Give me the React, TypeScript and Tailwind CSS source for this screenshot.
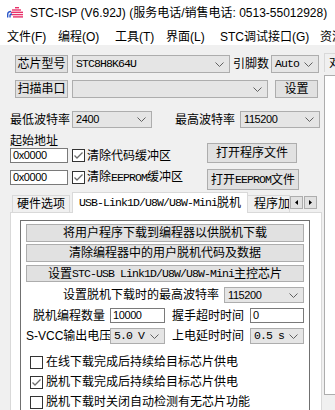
import type { ReactNode } from 'react'

const sans = "font-['Liberation_Sans','Noto_Sans_CJK_SC',sans-serif]"
const mono = "font-['Liberation_Mono','Noto_Sans_CJK_SC',monospace] text-[11.5px] tracking-[-0.9px]"
const num = "font-['Liberation_Sans','Noto_Sans_CJK_SC',sans-serif] text-[11px] tracking-[-0.4px]"

function Logo() {
  return (
    <svg width="16" height="11" viewBox="0 0 16 11" className="shrink-0">
      <rect x="8" y="0" width="4" height="1.4" fill="#e8336b" />
      <rect x="5" y="2.3" width="9" height="1.4" fill="#e8336b" />
      <rect x="4" y="4.6" width="12" height="1.4" fill="#e8336b" />
      <rect x="4" y="6.9" width="12" height="1.4" fill="#e8336b" />
      <rect x="6" y="9.2" width="10" height="1.4" fill="#e8336b" />
      <path d="M0.7 10.5 V7.5 Q0.7 4.5 4 4.5" fill="none" stroke="#2b57c9" strokeWidth="1.4" />
      <path d="M3 10.5 V8.2 Q3 7 5 7" fill="none" stroke="#2b57c9" strokeWidth="1.4" />
    </svg>
  )
}

function Chevron() {
  return (
    <svg width="9" height="5" viewBox="0 0 9 5" className="shrink-0">
      <path d="M0.5 0.5 L4.5 4.5 L8.5 0.5" fill="none" stroke="#606060" strokeWidth="1" />
    </svg>
  )
}

function Btn({ className = '', children }: { className?: string; children: ReactNode }) {
  return (
    <div className={`flex items-center justify-center shrink-0 border border-[#adadad] bg-[#e1e1e1] text-[12px] leading-none whitespace-nowrap ${className}`}>
      {children}
    </div>
  )
}

function Combo({ className = '', text = '', font = mono }: { className?: string; text?: string; font?: string }) {
  return (
    <div className={`flex items-center justify-between shrink-0 border border-[#adadad] bg-[#e5e5e5] pl-[3px] pr-[5px] leading-none ${className}`}>
      <span className={font}>{text}</span>
      <Chevron />
    </div>
  )
}

function Field({ className = '', text, font = num }: { className?: string; text: string; font?: string }) {
  return (
    <div className={`flex items-center shrink-0 border border-[#7a7a7a] bg-white pl-[2px] leading-none ${className}`}>
      <span className={font}>{text}</span>
    </div>
  )
}

function Check({ on = false }: { on?: boolean }) {
  return (
    <div className="w-[13px] h-[13px] shrink-0 border border-[#333333] bg-white">
      {on && (
        <svg width="11" height="11" viewBox="0 0 11 11">
          <path d="M1.5 5.5 L4 8 L9.5 2.5" fill="none" stroke="#6b6b6b" strokeWidth="1.3" />
        </svg>
      )}
    </div>
  )
}

const menus = [
  { label: '文件(F)', w: 'w-[51px]' },
  { label: '编程(O)', w: 'w-[57px]' },
  { label: '工具(T)', w: 'w-[51px]' },
  { label: '界面(L)', w: 'w-[54px]' },
  { label: 'STC调试接口(G)', w: 'w-[100px]' },
  { label: '资源', w: 'w-[40px]' },
]

const checks = [
  { label: '在线下载完成后持续给目标芯片供电', on: false },
  { label: '脱机下载完成后持续给目标芯片供电', on: true },
  { label: '脱机下载时关闭自动检测有无芯片功能', on: false },
]

export default function App() {
  return (
    <div className={`w-[335px] h-[410px] overflow-hidden bg-[#f0f0f0] text-black ${sans}`}>
      {/* title bar */}
      <div className="h-[24px] bg-white flex items-center pl-[7px] pt-[1px]">
        <Logo />
        <span className="ml-[7px] text-[12px] whitespace-nowrap">STC-ISP (V6.92J) (服务电话/销售电话: 0513-55012928)</span>
      </div>

      {/* menu bar */}
      <div className="h-[21px] bg-white flex items-center pl-[7px] pt-[4px] text-[12px] whitespace-nowrap">
        {menus.map(m => (
          <span key={m.label} className={`${m.w} shrink-0`}>{m.label}</span>
        ))}
      </div>

      <div className="flex">
        <div className="w-[324px] shrink-0 pt-[10px]">
          {/* chip */}
          <div className="flex items-center h-[18px] pl-[15px]">
            <Btn className="w-[53px] h-[18px]">芯片型号</Btn>
            <Combo className="ml-[4px] w-[158px] h-[18px]" text="STC8H8K64U" />
            <span className="ml-[3px] w-[36px] text-[12px] whitespace-nowrap">引脚数</span>
            <Combo className="ml-[2px] w-[48px] h-[18px]" text="Auto" />
          </div>

          {/* port */}
          <div className="mt-[7px] flex items-center h-[18px] pl-[15px]">
            <Btn className="w-[53px] h-[18px]">扫描串口</Btn>
            <Combo className="ml-[4px] w-[196px] h-[18px]" />
            <Btn className="ml-[7px] w-[43px] h-[18px]">设置</Btn>
          </div>

          {/* baud */}
          <div className="mt-[13px] flex items-center h-[17px] pl-[10px] text-[12px]">
            <span className="w-[62px] whitespace-nowrap">最低波特率</span>
            <Combo className="w-[80px] h-[17px]" text="2400" font={num} />
            <span className="ml-[23px] w-[65px] whitespace-nowrap">最高波特率</span>
            <Combo className="w-[80px] h-[17px]" text="115200" font={num} />
          </div>

          {/* address + files */}
          <div className="mt-[6px] flex">
            <div className="w-[207px] pl-[10px] text-[12px]">
              <div className="h-[14px] leading-[14px]">起始地址</div>
              <div className="flex items-center h-[15px]">
                <Field className="w-[58px] h-[15px]" text="0x0000" />
                <div className="ml-[4px]"><Check on /></div>
                <span className="ml-[2px] whitespace-nowrap">清除代码缓冲区</span>
              </div>
              <div className="mt-[7px] flex items-center h-[15px]">
                <Field className="w-[58px] h-[15px]" text="0x0000" />
                <div className="ml-[4px]"><Check on /></div>
                <span className="ml-[2px] whitespace-nowrap">清除<span className={mono}>EEPROM</span>缓冲区</span>
              </div>
            </div>
            <div>
              <Btn className="mt-[9px] w-[90px] h-[20px]">打开程序文件</Btn>
              <Btn className="mt-[6px] w-[92px] h-[21px]">打开<span className={mono}>EEPROM</span>文件</Btn>
            </div>
          </div>

          {/* tabs */}
          <div className="mt-[2px] pl-[10px]">
            <div className="flex items-end h-[20px] pl-[2px] text-[12px]">
              <div className="w-[58px] h-[17px] flex items-center justify-center border border-b-0 border-[#d9d9d9] bg-[#f0f0f0]">硬件选项</div>
              <div className="relative z-10 -mb-px ml-[2px] w-[176px] h-[21px] flex items-center justify-center border border-b-0 border-[#d9d9d9] bg-white whitespace-nowrap">
                <span className={mono}>USB-Link1D/U8W/U8W-Mini</span>脱机
              </div>
              <div className="w-[42px] h-[17px] flex items-center pl-[6px] border-t border-r border-[#d9d9d9] bg-[#f0f0f0] overflow-hidden whitespace-nowrap">程序加载</div>
              <div className="self-center mt-[1px] flex">
                <div className="w-[13px] h-[13px] flex items-center justify-center border border-[#adadad] bg-[#e1e1e1]">
                  <svg width="3" height="5" viewBox="0 0 3 5"><path d="M3 0 L0 2.5 L3 5 Z" fill="#000" /></svg>
                </div>
                <div className="ml-[1px] w-[13px] h-[13px] flex items-center justify-center border border-[#adadad] bg-[#e1e1e1]">
                  <svg width="3" height="5" viewBox="0 0 3 5"><path d="M0 0 L3 2.5 L0 5 Z" fill="#000" /></svg>
                </div>
              </div>
            </div>

            <div className="w-[312px] h-[220px] border border-[#d9d9d9] bg-white pt-[7px] pl-[9px]">
              <div className="w-[290px] h-[220px] border border-[#707070] px-[5px] pt-[3px] text-[12px]">
                <Btn className="w-full h-[18px]">将用户程序下载到编程器以供脱机下载</Btn>
                <Btn className="mt-[2px] w-full h-[18px]">清除编程器中的用户脱机代码及数据</Btn>
                <Btn className="mt-[3px] w-full h-[17px]">设置<span className={mono}>STC-USB Link1D/U8W/U8W-Mini</span>主控芯片</Btn>

                <div className="mt-[5px] flex items-center justify-end h-[16px]">
                  <span className="whitespace-nowrap">设置脱机下载时的最高波特率</span>
                  <Combo className="ml-[5px] w-[80px] h-[16px]" text="115200" font={num} />
                </div>

                <div className="mt-[5px] flex items-center h-[15px]">
                  <span className="w-[79px] text-right whitespace-nowrap">脱机编程数量</span>
                  <Field className="ml-[5px] w-[55px] h-[15px]" text="10000" />
                  <span className="ml-[7px] w-[72px] whitespace-nowrap">握手超时时间</span>
                  <Field className="ml-[6px] w-[54px] h-[15px]" text="0" />
                </div>

                <div className="mt-[5px] flex items-center h-[16px]">
                  <span className="w-[79px] text-right whitespace-nowrap">S-VCC输出电压</span>
                  <Combo className="ml-[5px] w-[55px] h-[16px]" text="5.0 V" />
                  <span className="ml-[7px] w-[72px] whitespace-nowrap">上电延时时间</span>
                  <Combo className="ml-[6px] w-[54px] h-[16px]" text="0.5 s" />
                </div>

                <div className="mt-[8px] pl-[4px]">
                  {checks.map(c => (
                    <div key={c.label} className="flex items-center h-[20px]">
                      <Check on={c.on} />
                      <span className="ml-[3px] whitespace-nowrap">{c.label}</span>
                    </div>
                  ))}
                </div>
              </div>
            </div>
          </div>
        </div>

        {/* right panel, cut off */}
        <div className="flex-1 min-w-0 pt-[8px] overflow-hidden">
          <div className="h-[19px] border-l border-t border-[#d9d9d9] bg-[#f0f0f0] pl-[4px] text-[12px] leading-[19px] whitespace-nowrap overflow-hidden">对</div>
          <div className="mt-[3px] h-[320px] border-l border-t border-b border-[#adadad] bg-white" />
        </div>
      </div>
    </div>
  )
}
